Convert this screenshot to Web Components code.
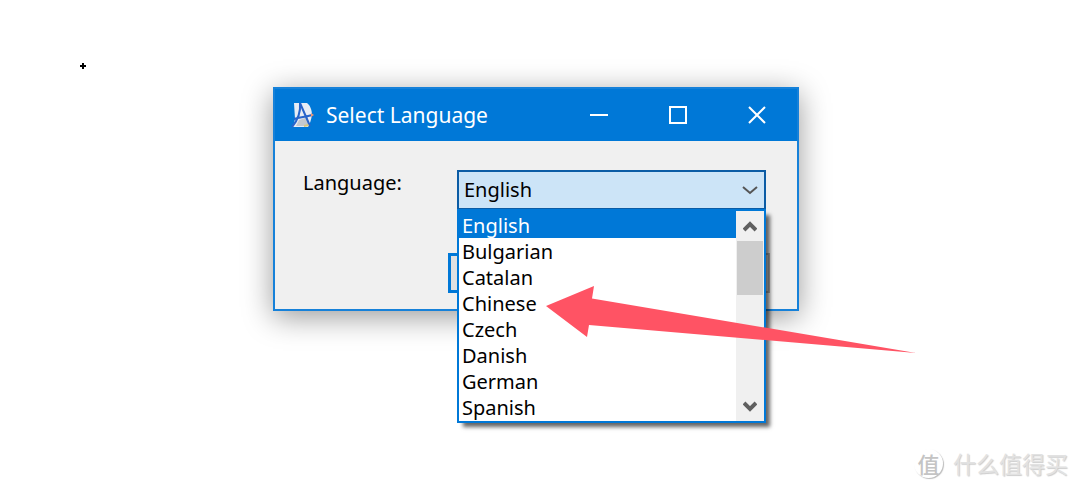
<!DOCTYPE html>
<html lang="en">
<head>
<meta charset="utf-8">
<meta name="viewport" content="width=device-width, initial-scale=1">
<title>Select Language</title>
<style>
html,body{height:100%}
body{margin:0;background:#fff;color:#000;font:20px/26px "Noto Sans","Noto Sans CJK SC",sans-serif;overflow:hidden}
</style>
</head>
<body>
<desktop-stage>
  <language-dialog></language-dialog>
  <brand-mark slot="footer"></brand-mark>
</desktop-stage>

<template id="stage">
<style>
:host{display:flex;flex-direction:column;min-height:100%;box-sizing:border-box;position:relative;padding:87px 12px 12px}
main{flex:1;display:flex;justify-content:center;padding-right:8px}
footer{display:flex;justify-content:flex-end}
.cursor{position:absolute;left:80px;top:63px}
</style>
<svg class="cursor" width="6" height="6" viewBox="0 0 6 6" aria-hidden="true"><path d="M2 0h2v2h2v2H4v2H2V4H0V2h2z"/></svg>
<main><slot></slot></main>
<footer><slot name="footer"></slot></footer>
</template>

<template id="dialog">
<style>
:host{display:block;position:relative;width:100%;max-width:526px;height:max-content}
section{border:2px solid #1681d9;background:#f0f0f0;box-shadow:0 6px 28px rgba(0,0,0,.4)}
.body{display:grid;row-gap:43px;padding:29px 31px 16px 28px}
.actions{display:grid;grid-template-columns:1fr 1fr;gap:12px;margin:0 -4px 0 145px}
button{height:40px;border:2px solid #adadad;background:#e1e1e1;padding:0;font:inherit}
button.primary{border:3px solid #0078d7}
.arrow{position:absolute;z-index:2;left:273px;top:197px;pointer-events:none}
</style>
<section role="dialog" aria-labelledby="title">
  <title-bar id="title">Select Language</title-bar>
  <div class="body">
    <language-combo>Language:</language-combo>
    <div class="actions"><button class="primary" aria-label="OK"></button><button aria-label="Cancel"></button></div>
  </div>
</section>
<svg class="arrow" width="371" height="72" viewBox="0 0 371 72" aria-hidden="true"><path fill="#ff5364" d="M0 22 48 2 46 14.500 370 69 43 41 41 53z"/></svg>
</template>

<template id="titlebar">
<style>
:host{display:flex;align-items:center;height:52px;background:#0078d7;color:#fff;padding:0 1px 0 16px}
h1{flex:1;margin:0 0 0 10px;font:400 21px/28px "Noto Sans",sans-serif}
button{width:79px;height:52px;padding:0;border:0;background:none;display:grid;place-items:center}
</style>
<svg width="25" height="28" viewBox="0 0 25 28" aria-hidden="true">
 <path fill="#e8edf5" d="M3 2h13c3 2 5 7 5 12-1 5-2 9-4 12H2l2-8z"/>
 <path fill="#c3c9cf" d="m8 19 9-3v9H5z"/>
 <path fill="none" stroke="#2864ca" stroke-width="2" d="M1 26c5-6 9-13 8-24l10 23M3 18c6-2 12-2 18-4"/>
 <path fill="#ef9674" d="m20 12 3 2-3 2z"/><path fill="#d7c77c" d="m13 24 4-1 1 2-5 1z"/>
</svg>
<h1><slot></slot></h1>
<button aria-label="Minimize"><svg width="20" height="20" stroke="#fff" stroke-width="2"><path d="M1 10h18"/></svg></button>
<button aria-label="Maximize"><svg width="20" height="20" fill="none" stroke="#fff" stroke-width="2"><path d="M2 2h16v16H2z"/></svg></button>
<button aria-label="Close"><svg width="20" height="20" stroke="#fff" stroke-width="2"><path d="m2 2 16 16M18 2 2 18"/></svg></button>
</template>

<template id="combo">
<style>
:host{display:grid;grid-template-columns:154px 1fr}
label{font-size:20px;line-height:26px}
.box{position:relative;height:40px}
select{appearance:none;box-sizing:border-box;width:100%;margin:0;border-radius:0;outline:0;font:20px/26px "Noto Sans",sans-serif;color:#000}
#language{height:40px;border:2px solid #0b5ca5;background:#cce4f7;padding:0 32px 0 5px}
.chevron{position:absolute;right:8px;top:14px;pointer-events:none}
.popup{position:absolute;z-index:1;left:0;right:0;top:39px;display:flex;border:2px solid #0078d7;background:#fff;box-shadow:5px 5px 4px -1px rgba(0,0,0,.6)}
.popup select{flex:1;width:0;height:210px;border:0;border-top:1px solid #0078d7;padding:0;background:#fff;overflow:hidden;scrollbar-width:none}
option{height:26px;min-height:26px;line-height:26px;padding:0 0 0 3px;box-sizing:border-box}
.popup .current{background:#0078d7;color:#fff}
.scroll{display:flex;flex-direction:column;width:28px;background:#f0f0f0}
.scroll button{height:30px;border:0;padding:0;background:none;display:grid;place-items:center}
.thumb{height:54px;margin:0 1px;background:#cdcdcd}
.track{flex:1}
</style>
<label for="language"><slot></slot></label>
<div class="box">
 <select id="language"><option>English</option></select>
 <svg class="chevron" width="16" height="12" fill="none" stroke="#555" stroke-width="2" aria-hidden="true"><path d="m1 3 7 6 7-6"/></svg>
 <div class="popup">
  <select id="list" size="8" aria-label="Available languages"><option class="current">English</option><option>Bulgarian</option><option>Catalan</option><option>Chinese</option><option>Czech</option><option>Danish</option><option>German</option><option>Spanish</option></select>
  <div class="scroll">
   <button aria-label="Scroll up"><svg width="14" height="14" fill="none" stroke="#606060" stroke-width="4"><path d="m1 11 6-6 6 6"/></svg></button>
   <div class="thumb"></div><div class="track"></div>
   <button aria-label="Scroll down"><svg width="14" height="14" fill="none" stroke="#606060" stroke-width="4"><path d="m1 4 6 6 6-6"/></svg></button>
  </div>
 </div>
</div>
</template>

<template id="brand">
<style>
:host{display:flex;align-items:center;gap:10px;color:#e2e2e2;font:23px/32px "Noto Sans CJK SC",sans-serif;text-shadow:1px 1px 1px #ccc}
b{box-sizing:border-box;width:29px;height:29px;border-radius:50%;box-shadow:1px 1px 1px #bbb;text-align:center;color:#c4c4c4;font-size:22px;line-height:28px;font-weight:500;text-shadow:none}
</style>
<b>值</b><span>什么值得买</span>
</template>

<script>
class TemplateElement extends HTMLElement{
  constructor(){
    super();
    this.attachShadow({mode:"open"}).append(document.getElementById(this.constructor.template).content.cloneNode(true));
  }
}
class DesktopStage extends TemplateElement{static template="stage"}
class LanguageDialog extends TemplateElement{static template="dialog"}
class TitleBar extends TemplateElement{static template="titlebar"}
class BrandMark extends TemplateElement{static template="brand"}
class LanguageCombo extends TemplateElement{
  static template="combo";
  connectedCallback(){
    const list=this.shadowRoot.getElementById("list");
    const field=this.shadowRoot.getElementById("language");
    list.addEventListener("change",()=>{
      field.options[0].textContent=list.value;
      for(const o of list.options)o.classList.toggle("current",o.selected);
    });
  }
}
customElements.define("title-bar",TitleBar);
customElements.define("language-combo",LanguageCombo);
customElements.define("language-dialog",LanguageDialog);
customElements.define("brand-mark",BrandMark);
customElements.define("desktop-stage",DesktopStage);
</script>
</body>
</html>
